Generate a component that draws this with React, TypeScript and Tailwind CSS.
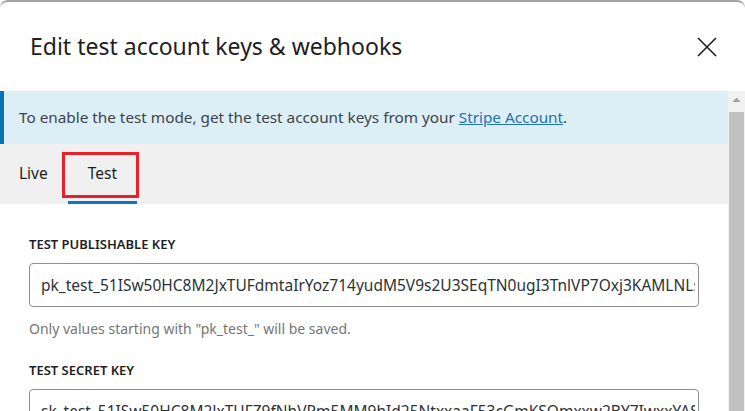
const PK = "pk_test_51ISw50HC8M2JxTUFdmtaIrYoz714yudM5V9s2U3SEqTN0ugI3TnlVP7Oxj3KAMLNLsbE1bXFpxPkqCr9yIBcuSZQm00vlmUX9Nm";
const SK = "sk_test_51ISw50HC8M2JxTUFZ9fNhVRm5MM9hId25NtxxaaF53cGmKSQmxxw2BY7IwxxYASBz00qxVbNn7";

function KeyField({ label, value, help }: { label: string; value: string; help?: string }) {
  return (
    <div className="flex flex-col">
      <label className="text-[13px] font-semibold text-[#1e1e1e] leading-[18px]">{label}</label>
      <input
        readOnly
        value={value}
        className="mt-[10px] h-[44px] w-full rounded-[4px] border border-[#8c8f94] bg-white pl-[11px] pr-[3px] text-[15.5px] text-[#2c3338] outline-none"
      />
      {help && <p className="mt-[12px] text-[14px] text-[#757575] leading-[20px]">{help}</p>}
    </div>
  );
}

export default function App() {
  return (
    <div className="w-[745px] h-[411px] overflow-hidden bg-white font-['Segoe_UI','Noto_Sans',sans-serif]">
      <div className="flex h-full flex-col rounded-t-[8px] border-t-2 border-[#a3a3a3] bg-white">
        {/* Header */}
        <div className="flex h-[89px] shrink-0 items-center justify-between pl-[30px] pr-[28px]">
          <h1 className="text-[23px] text-[#1e1e1e]">Edit test account keys &amp; webhooks</h1>
          <button className="text-[#1e1e1e]">
            <svg width="20" height="20" viewBox="0 0 20 20" fill="none" stroke="currentColor" strokeWidth="1.6">
              <path d="M1 1 L19 19 M19 1 L1 19" />
            </svg>
          </button>
        </div>

        {/* Body with scrollbar */}
        <div className="flex min-h-0 flex-1">
          <div className="flex-1 overflow-hidden">
            {/* Notice */}
            <div className="flex h-[53px] items-center border-l-4 border-[#0a73b5] bg-[#ddeff6] pl-[15px] text-[15.3px] text-[#3c434a]">
              <span>
                To enable the test mode, get the test account keys from your{" "}
                <a className="text-[#2271b1] underline">Stripe Account</a>.
              </span>
            </div>

            {/* Tabs */}
            <div className="relative flex h-[60px] bg-[#f0f0f0]">
              <button className="px-[19px] text-[15.5px] text-[#1e1e1e]">Live</button>
              <button className="relative ml-[1px] px-[20px] text-[15.5px] text-[#1e1e1e]">
                Test
                <span className="absolute bottom-0 left-0 h-[3px] w-full bg-[#0b76c1]" />
              </button>
              <div className="absolute left-[62px] top-[8px] h-[46px] w-[77px] border-[3px] border-[#e8202a]" />
            </div>

            {/* Fields */}
            <div className="flex flex-col gap-[22px] px-[29px] pt-[31px]">
              <KeyField label="TEST PUBLISHABLE KEY" value={PK} help={'Only values starting with "pk_test_" will be saved.'} />
              <KeyField label="TEST SECRET KEY" value={SK} />
            </div>
          </div>

          {/* Scrollbar */}
          <div className="flex w-[17px] shrink-0 flex-col items-center bg-[#f1f1f1]">
            <svg width="17" height="17" viewBox="0 0 17 17" className="shrink-0">
              <path d="M4.5 11 L8.5 6.5 L12.5 11 Z" fill="#a3a3a3" />
            </svg>
            <div className="mt-[4px] w-[15px] flex-1 bg-[#c1c1c1]" />
          </div>
        </div>
      </div>
    </div>
  );
}
